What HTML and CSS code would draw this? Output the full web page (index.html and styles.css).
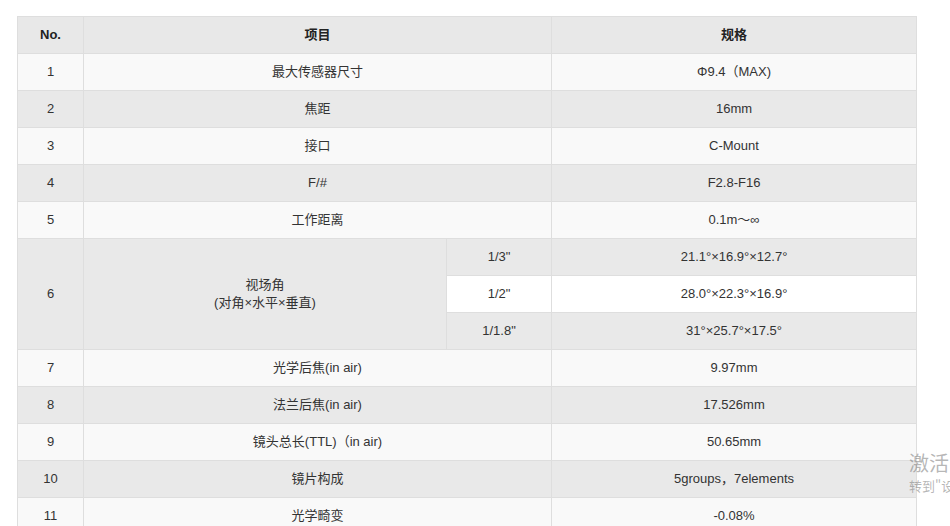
FILE: index.html
```html
<!DOCTYPE html>
<html lang="zh-CN">
<head>
<meta charset="utf-8">
<title>规格</title>
<link rel="stylesheet" href="styles.css">
</head>
<body>
<div class="page">
<table class="spec">
  <colgroup>
    <col class="c-no"><col class="c-item"><col class="c-sub"><col class="c-val">
  </colgroup>
  <thead>
    <tr><th>No.</th><th colspan="2">项目</th><th>规格</th></tr>
  </thead>
  <tbody>
    <tr><td>1</td><td colspan="2">最大传感器尺寸</td><td>Φ9.4（MAX)</td></tr>
    <tr><td>2</td><td colspan="2">焦距</td><td>16mm</td></tr>
    <tr><td>3</td><td colspan="2">接口</td><td>C-Mount</td></tr>
    <tr><td>4</td><td colspan="2">F/#</td><td>F2.8-F16</td></tr>
    <tr><td>5</td><td colspan="2">工作距离</td><td>0.1m～∞</td></tr>
    <tr><td rowspan="3">6</td><td rowspan="3">视场角<br>(对角×水平×垂直)</td><td>1/3"</td><td>21.1°×16.9°×12.7°</td></tr>
    <tr><td>1/2"</td><td>28.0°×22.3°×16.9°</td></tr>
    <tr><td>1/1.8"</td><td>31°×25.7°×17.5°</td></tr>
    <tr><td>7</td><td colspan="2">光学后焦(in air)</td><td>9.97mm</td></tr>
    <tr><td>8</td><td colspan="2">法兰后焦(in air)</td><td>17.526mm</td></tr>
    <tr><td>9</td><td colspan="2">镜头总长(TTL)（in air)</td><td>50.65mm</td></tr>
    <tr><td>10</td><td colspan="2">镜片构成</td><td>5groups，7elements</td></tr>
    <tr><td>11</td><td colspan="2">光学畸变</td><td>-0.08%</td></tr>
  </tbody>
</table>
</div>
<div class="watermark">
  <div class="wm-title">激活 Windows</div>
  <div class="wm-sub">转到"设置"以激活 Windows。</div>
</div>
</body>
</html>
```
FILE: styles.css
```css
html, body {
  margin: 0;
  padding: 0;
  background: #fff;
  overflow: hidden;
  height: 526px;
}
body {
  font-family: "Liberation Sans", Arial, "Noto Sans CJK SC", sans-serif;
  font-size: 13px;
  color: #333;
  position: relative;
}
.page {
  padding: 16px 0 0 17px;
}
.spec {
  border-collapse: collapse;
  width: 899px;
  table-layout: fixed;
}
.c-no { width: 66px; }
.c-item { width: 363px; }
.c-sub { width: 105px; }
.c-val { width: 365px; }
.spec th, .spec td {
  border: 1px solid #dedede;
  height: 37px;
  padding: 0 4px;
  text-align: center;
  vertical-align: middle;
  line-height: 18px;
  box-sizing: border-box;
}
.spec th {
  font-weight: bold;
  background: #e8e8e8;
  color: #222;
}
.spec tbody tr:nth-child(odd) td { background: #f9f9f9; }
.spec tbody tr:nth-child(even) td { background: #e9e9e9; }
.spec tbody tr:nth-child(6) td { background: #e9e9e9; }
.spec tbody tr:nth-child(7) td { background: #ffffff; }
.spec tbody tr:nth-child(8) td { background: #e9e9e9; }
.spec tbody tr:nth-child(9) td { background: #f9f9f9; }
.spec tbody tr:nth-child(10) td { background: #e9e9e9; }
.spec tbody tr:nth-child(11) td { background: #f9f9f9; }
.spec tbody tr:nth-child(12) td { background: #e9e9e9; }
.spec tbody tr:nth-child(13) td { background: #f9f9f9; }
.watermark {
  position: absolute;
  left: 909px;
  top: 450px;
  white-space: nowrap;
  color: rgba(120, 120, 120, 0.55);
  font-family: "Noto Sans CJK SC", sans-serif;
}
.wm-title {
  font-size: 20px;
  line-height: 26px;
}
.wm-sub {
  font-size: 13px;
  line-height: 20px;
}
```
